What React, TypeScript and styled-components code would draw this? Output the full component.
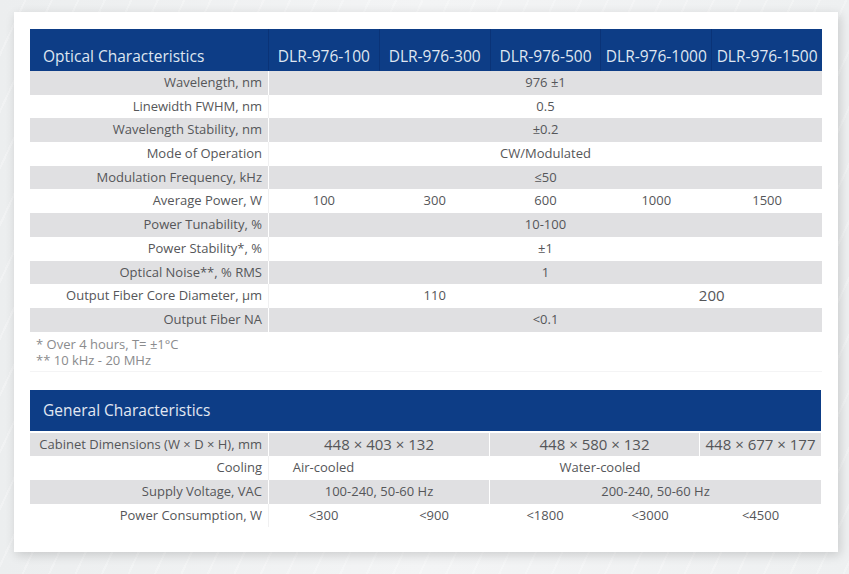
import React from "react";
import styled, { createGlobalStyle } from "styled-components";

const Global = createGlobalStyle`
  html, body {
    margin: 0;
    padding: 0;
  }
  body {
    width: 849px;
    height: 574px;
    overflow: hidden;
    font-family: "Open Sans", "Noto Sans", sans-serif;
    background:
      repeating-linear-gradient(115deg, rgba(255,255,255,0) 0 22px, rgba(255,255,255,0.25) 22px 24px),
      linear-gradient(90deg, #eceeef 0%, #f3f4f5 50%, #eef0f1 100%);
  }
`;

const Page = styled.div`
  padding: 12px 11px 22px 14px;
`;

const Card = styled.div`
  width: 824px;
  height: 540px;
  box-sizing: border-box;
  background: #ffffff;
  box-shadow: 2px 3px 10px rgba(0, 0, 0, 0.16);
  padding: 17px 16px 24px 16px;
  display: flex;
  flex-direction: column;
`;

const TOP_COLS = "238px repeat(5, 1fr)";
const GEN_COLS = "238px 110px 111px 111px 99px 122px";

const Grid = styled.div<{ $cols: string }>`
  display: grid;
  grid-template-columns: ${(p) => p.$cols};
  width: 792px;
`;

const HeadCell = styled.div<{ $first?: boolean }>`
  background: #0d3d86;
  color: #dfe6f1;
  font-size: 15.5px;
  line-height: 20px;
  height: 42px;
  box-sizing: border-box;
  padding: 17px 0 5px ${(p) => (p.$first ? "13px" : "0")};
  text-align: ${(p) => (p.$first ? "left" : "center")};
  white-space: nowrap;
  border-left: ${(p) => (p.$first ? "none" : "1px solid rgba(0, 20, 70, 0.22)")};
`;

const GenHead = styled.div`
  grid-column: 1 / -1;
  background: #0d3d86;
  color: #e2e8f2;
  font-size: 15.5px;
  line-height: 20px;
  height: 41.5px;
  box-sizing: border-box;
  padding: 10px 13px 0;
  margin-bottom: 1.5px;
`;

const Label = styled.div<{ $shade: boolean }>`
  background: ${(p) => (p.$shade ? "#e0e0e2" : "#ffffff")};
  color: #555659;
  font-size: 13px;
  line-height: 23.7px;
  height: 23.7px;
  text-align: right;
  padding-right: 6px;
  white-space: nowrap;
`;

const Value = styled.div<{ $shade: boolean; $span?: number; $big?: boolean; $lead?: boolean }>`
  grid-column: span ${(p) => p.$span ?? 1};
  background: ${(p) => (p.$shade ? "#e0e0e2" : "#ffffff")};
  border-left: 1px solid ${(p) => (p.$shade ? "#ffffff" : p.$lead ? "#f0f0f1" : "#ffffff")};
  color: #555659;
  font-size: ${(p) => (p.$big ? "15px" : "13px")};
  line-height: 23.7px;
  height: 23.7px;
  text-align: center;
  white-space: nowrap;
`;

const Notes = styled.div`
  width: 792px;
  box-sizing: border-box;
  padding: 4px 6px 3px;
  color: #8a8b8d;
  font-size: 13px;
  line-height: 16px;
  border-bottom: 1px solid #f4f4f5;
  margin-bottom: 18px;
`;

type Cell = { v: string; span?: number; big?: boolean };
type Row = { label: string; cells: Cell[] };

const optical: Row[] = [
  { label: "Wavelength, nm", cells: [{ v: "976 ±1", span: 5 }] },
  { label: "Linewidth FWHM, nm", cells: [{ v: "0.5", span: 5 }] },
  { label: "Wavelength Stability, nm", cells: [{ v: "±0.2", span: 5 }] },
  { label: "Mode of Operation", cells: [{ v: "CW/Modulated", span: 5 }] },
  { label: "Modulation Frequency, kHz", cells: [{ v: "≤50", span: 5 }] },
  {
    label: "Average Power, W",
    cells: [{ v: "100" }, { v: "300" }, { v: "600" }, { v: "1000" }, { v: "1500" }],
  },
  { label: "Power Tunability, %", cells: [{ v: "10-100", span: 5 }] },
  { label: "Power Stability*, %", cells: [{ v: "±1", span: 5 }] },
  { label: "Optical Noise**, % RMS", cells: [{ v: "1", span: 5 }] },
  {
    label: "Output Fiber Core Diameter, µm",
    cells: [{ v: "110", span: 3 }, { v: "200", span: 2, big: true }],
  },
  { label: "Output Fiber NA", cells: [{ v: "<0.1", span: 5 }] },
];

const general: Row[] = [
  {
    label: "Cabinet Dimensions (W × D × H), mm",
    cells: [
      { v: "448 × 403 × 132", span: 2, big: true },
      { v: "448 × 580 × 132", span: 2, big: true },
      { v: "448 × 677 × 177", big: true },
    ],
  },
  { label: "Cooling", cells: [{ v: "Air-cooled" }, { v: "Water-cooled", span: 4 }] },
  {
    label: "Supply Voltage, VAC",
    cells: [{ v: "100-240, 50-60 Hz", span: 2 }, { v: "200-240, 50-60 Hz", span: 3 }],
  },
  {
    label: "Power Consumption, W",
    cells: [{ v: "<300" }, { v: "<900" }, { v: "<1800" }, { v: "<3000" }, { v: "<4500" }],
  },
];

const models = ["DLR-976-100", "DLR-976-300", "DLR-976-500", "DLR-976-1000", "DLR-976-1500"];

function Rows({ rows }: { rows: Row[] }) {
  return (
    <>
      {rows.map((r, i) => {
        const shade = i % 2 === 0;
        return (
          <React.Fragment key={r.label}>
            <Label $shade={shade}>{r.label}</Label>
            {r.cells.map((c, j) => (
              <Value key={j} $shade={shade} $span={c.span} $big={c.big} $lead={j === 0}>
                {c.v}
              </Value>
            ))}
          </React.Fragment>
        );
      })}
    </>
  );
}

export default function App() {
  return (
    <>
      <Global />
      <Page>
        <Card>
          <Grid $cols={TOP_COLS}>
            <HeadCell $first>Optical Characteristics</HeadCell>
            {models.map((m) => (
              <HeadCell key={m}>{m}</HeadCell>
            ))}
            <Rows rows={optical} />
          </Grid>
          <Notes>
            <div>* Over 4 hours, T= ±1°C</div>
            <div>** 10 kHz - 20 MHz</div>
          </Notes>
          <Grid $cols={GEN_COLS}>
            <GenHead>General Characteristics</GenHead>
            <Rows rows={general} />
          </Grid>
        </Card>
      </Page>
    </>
  );
}
